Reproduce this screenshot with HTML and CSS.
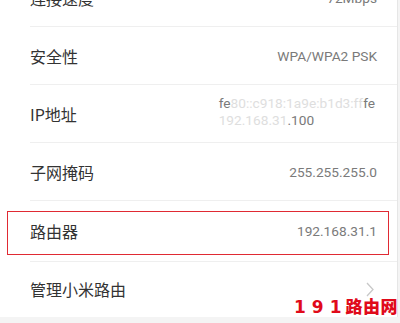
FILE: index.html
```html
<!DOCTYPE html>
<html lang="zh-CN">
<head>
  <meta charset="UTF-8">
  <title>网络详情</title>
  <link rel="stylesheet" href="styles.css">
</head>
<body>
  <div class="screen">
    <ul class="info-list">
      <li class="row">
        <span class="label">连接速度</span>
        <span class="value">72Mbps</span>
      </li>
      <li class="row">
        <span class="label">安全性</span>
        <span class="value">WPA/WPA2 PSK</span>
      </li>
      <li class="row">
        <span class="label">IP地址</span>
        <span class="value multi">
          <span>fe<span class="blur">80::c918:1a9e:b1d3:ff</span>fe</span>
          <span><span class="blur">192.168.31</span>.100</span>
        </span>
      </li>
      <li class="row">
        <span class="label">子网掩码</span>
        <span class="value">255.255.255.0</span>
      </li>
      <li class="row marked">
        <span class="label">路由器</span>
        <span class="value">192.168.31.1</span>
      </li>
      <li class="row last">
        <span class="label">管理小米路由</span>
        <svg class="chevron" width="8" height="15" viewBox="0 0 8 15">
          <path d="M1 1l6 6.5-6 6.5" fill="none" stroke="#c8c8c8" stroke-width="1.3"/>
        </svg>
      </li>
    </ul>
    <div class="watermark"><span class="digits">191</span>路由网</div>
  </div>
</body>
</html>
```

FILE: styles.css
```css
html, body {
  margin: 0;
  padding: 0;
  background-color: #f4f4f4;
}
.screen {
  position: relative;
  width: 397px;
  height: 317px;
  overflow: hidden;
  background-color: #fff;
  border-right: 1px solid #e6e6e6;
  font-family: 'Roboto', 'Noto Sans CJK SC', sans-serif;
}
.info-list {
  list-style: none;
  margin: -31px 0 0 0;
  padding: 0;
}
.row {
  position: relative;
  display: flex;
  align-items: center;
  justify-content: space-between;
  height: 57px;
  margin-left: 30px;
  padding-right: 20px;
  border-bottom: 1px solid #efefef;
}
.label {
  font-family: 'Noto Sans CJK SC', sans-serif;
  font-size: 16px;
  color: #333;
}
.value {
  font-size: 13.7px;
  color: #7a7a7a;
}
.value.multi {
  display: flex;
  flex-direction: column;
  align-items: flex-start;
  gap: 1px;
  margin-top: -4px;
  padding-right: 2px;
}
.blur {
  color: #dedede;
}
.marked {
  height: 60px;
}
.marked::after {
  content: '';
  position: absolute;
  left: -23px;
  right: 8px;
  top: 10px;
  bottom: 6px;
  border: 1.5px solid #e02a33;
}
.last {
  height: 54px;
  border-bottom: none;
}
.chevron {
  margin-right: 3px;
}
.watermark {
  position: absolute;
  right: -1px;
  bottom: 1px;
  font-family: 'Noto Sans CJK SC', sans-serif;
  font-size: 17px;
  font-weight: 900;
  letter-spacing: 0.5px;
  color: #e00a1a;
  line-height: 1;
}
.watermark .digits {
  font-family: 'DejaVu Sans', sans-serif;
  font-weight: bold;
  letter-spacing: 6px;
  margin-right: -2px;
}
```
